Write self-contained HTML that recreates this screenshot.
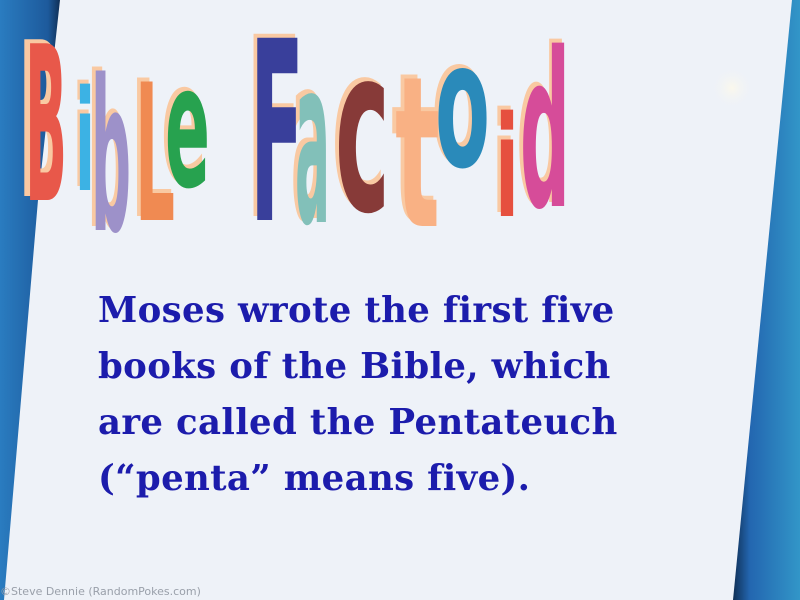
<!DOCTYPE html>
<html><head><meta charset="utf-8"><style>
html,body{margin:0;padding:0;}
body{width:800px;height:600px;overflow:hidden;position:relative;background:#eef2f8;}
svg{position:absolute;left:0;top:0;}
.txt{position:absolute;left:98px;top:283px;font-family:"DejaVu Serif",serif;font-weight:bold;font-size:35.5px;line-height:56px;color:#1c1cac;white-space:nowrap;letter-spacing:0.35px;}
.wm{position:absolute;left:0;top:585px;font-family:"DejaVu Sans",sans-serif;font-size:11px;color:#9aa0aa;}
</style></head><body>
<svg width="800" height="600">
<defs>
<linearGradient id="lb" x1="0" x2="1"><stop offset="0" stop-color="#2a7cc0"/><stop offset="0.8" stop-color="#1d5a9c"/><stop offset="1" stop-color="#0f2f55"/></linearGradient>
<linearGradient id="rb" x1="0" x2="1"><stop offset="0" stop-color="#0f2f55"/><stop offset="0.25" stop-color="#2366b0"/><stop offset="1" stop-color="#3296c8"/></linearGradient>
<radialGradient id="sp"><stop offset="0" stop-color="#fbf8ec"/><stop offset="1" stop-color="#eef2f8" stop-opacity="0"/></radialGradient>
</defs>
<polygon points="0,0 60,0 38,200 4,600 0,600" fill="url(#lb)"/>
<polygon points="792,0 800,0 800,600 733,600" fill="url(#rb)"/>
<circle cx="732" cy="88" r="22" fill="url(#sp)"/>
<g font-family="DejaVu Sans,sans-serif" font-weight="bold">
<g fill="#f9c9a2">
<text x="19" y="196" font-size="215" textLength="44" lengthAdjust="spacingAndGlyphs">B</text>
<text x="72" y="186" font-size="140" textLength="22" lengthAdjust="spacingAndGlyphs">i</text>
<text x="87" y="226" font-size="210" textLength="42" lengthAdjust="spacingAndGlyphs">b</text>
<text x="131" y="216" font-size="190" textLength="42" lengthAdjust="spacingAndGlyphs">L</text>
<text x="161" y="182" font-size="170" textLength="46" lengthAdjust="spacingAndGlyphs">e</text>
<text x="246" y="216" font-size="250" textLength="56" lengthAdjust="spacingAndGlyphs">F</text>
<text x="291" y="218" font-size="230" textLength="36" lengthAdjust="spacingAndGlyphs">a</text>
<text x="331" y="206" font-size="230" textLength="56" lengthAdjust="spacingAndGlyphs">c</text>
<text x="391" y="222" font-size="210" textLength="46" lengthAdjust="spacingAndGlyphs">t</text>
<text x="431" y="162" font-size="175" textLength="56" lengthAdjust="spacingAndGlyphs">o</text>
<text x="491" y="212" font-size="140" textLength="26" lengthAdjust="spacingAndGlyphs">i</text>
<text x="516" y="202" font-size="215" textLength="52" lengthAdjust="spacingAndGlyphs">d</text>
</g>
<text x="25" y="200" font-size="215" textLength="42" lengthAdjust="spacingAndGlyphs" fill="#e8584a">B</text>
<text x="75" y="190" font-size="140" textLength="20" lengthAdjust="spacingAndGlyphs" fill="#3cb2e4">i</text>
<text x="91" y="230" font-size="210" textLength="40" lengthAdjust="spacingAndGlyphs" fill="#9d91c9">b</text>
<text x="135" y="220" font-size="190" textLength="40" lengthAdjust="spacingAndGlyphs" fill="#f08a52">L</text>
<text x="165" y="186" font-size="170" textLength="45" lengthAdjust="spacingAndGlyphs" fill="#27a24f">e</text>
<text x="250" y="220" font-size="250" textLength="54" lengthAdjust="spacingAndGlyphs" fill="#393f9b">F</text>
<text x="295" y="222" font-size="230" textLength="35" lengthAdjust="spacingAndGlyphs" fill="#82c0b9">a</text>
<text x="335" y="210" font-size="230" textLength="55" lengthAdjust="spacingAndGlyphs" fill="#873a38">c</text>
<text x="395" y="226" font-size="210" textLength="45" lengthAdjust="spacingAndGlyphs" fill="#f9b184">t</text>
<text x="435" y="166" font-size="175" textLength="55" lengthAdjust="spacingAndGlyphs" fill="#2a8aba">o</text>
<text x="495" y="216" font-size="140" textLength="24" lengthAdjust="spacingAndGlyphs" fill="#e6503f">i</text>
<text x="520" y="206" font-size="215" textLength="50" lengthAdjust="spacingAndGlyphs" fill="#d64c99">d</text>
</g>
</svg>
<div class="txt">Moses wrote the first five<br>books of the Bible, which<br>are called the Pentateuch<br>(“penta” means five).</div>
<div class="wm">©Steve Dennie (RandomPokes.com)</div>
</body></html>
